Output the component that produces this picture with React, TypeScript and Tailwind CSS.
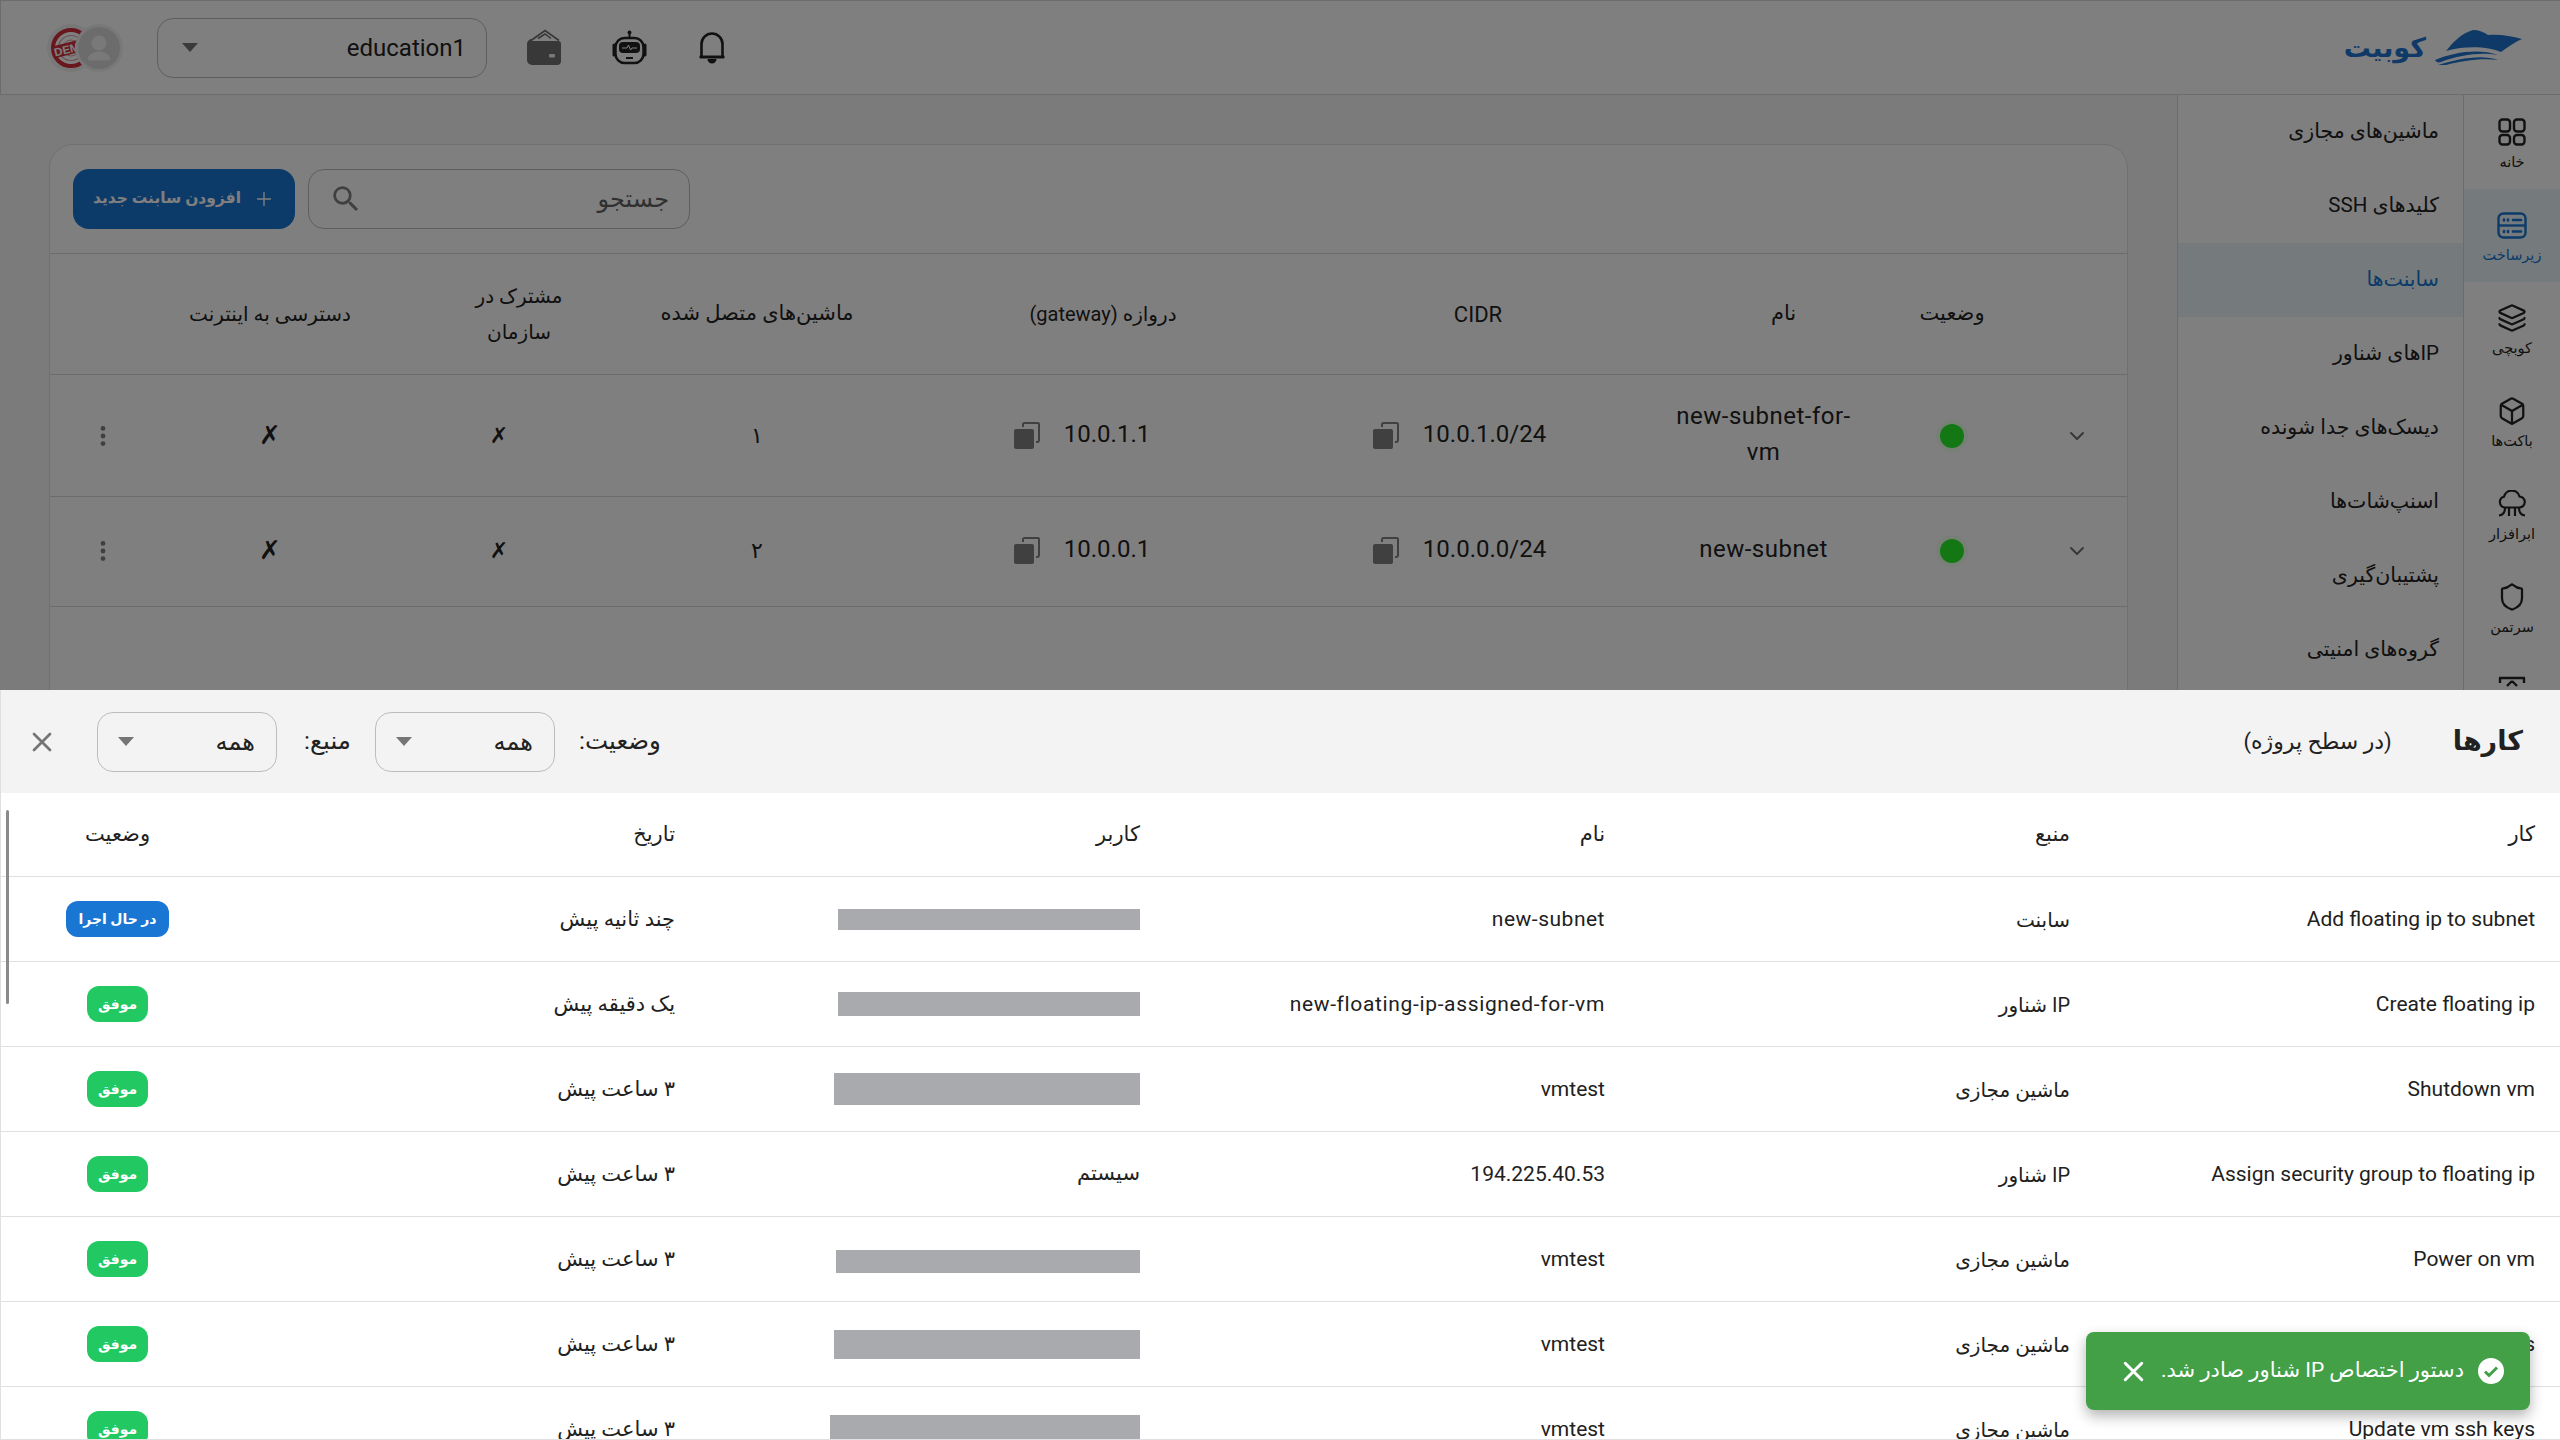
import React from "react";
import { Layers, Box, Shield, X, ChevronDown, Plus, MoreVertical } from "lucide-react";

const navItems = ["ماشین‌های مجازی", "کلیدهای SSH", "سابنت‌ها", "IPهای شناور", "دیسک‌های جدا شونده", "اسنپ‌شات‌ها", "پشتیبان‌گیری", "گروه‌های امنیتی"];

function Caret() {
  return (
    <svg width="16" height="9" viewBox="0 0 16 9" className="shrink-0">
      <path d="M0 0h16L8 9z" fill="#757575" />
    </svg>
  );
}

function CopyIcon() {
  return (
    <svg width="26" height="27" viewBox="0 0 26 27" className="shrink-0">
      <path d="M9 5V2.500A1.500 1.500 0 0 1 10.500 1H24a1 1 0 0 1 1 1v16a2 2 0 0 1-2 2h-1" fill="none" stroke="#808080" strokeWidth="2" />
      <rect x="0" y="7" width="20" height="20" rx="2" fill="#808080" />
    </svg>
  );
}

function Demo() {
  return (
    <svg width="48" height="48" viewBox="0 0 48 48">
      <circle cx="24" cy="24" r="24" fill="#f0f0f0" />
      <circle cx="24" cy="24" r="18" fill="#fff" stroke="#d32f3a" strokeWidth="4" />
      <circle cx="24" cy="24" r="12.500" fill="none" stroke="#d9a0a4" strokeWidth="1.200" />
      <circle cx="24" cy="24" r="8" fill="none" stroke="#d9a0a4" strokeWidth="1" />
      <g transform="rotate(-14 24 24)">
        <rect x="6" y="18" width="36" height="12" fill="#d32f3a" />
        <text x="24" y="28.500" textAnchor="middle" fontSize="11.500" fontWeight="700" fill="#fff" fontFamily="Liberation Sans, sans-serif">DEMO</text>
      </g>
    </svg>
  );
}

function Avatar() {
  return (
    <svg width="48" height="48" viewBox="0 0 48 48">
      <circle cx="24" cy="24" r="24" fill="#f0f0f0" />
      <circle cx="24" cy="24" r="21" fill="#d8d8d8" />
      <circle cx="24" cy="19" r="7.500" fill="#f2f2f2" />
      <path d="M13 35c0-5 6-7.500 11-7.500S35 30 35 35c0 1-.7 1.500-1.500 1.500h-19C13.700 36.500 13 36 13 35z" fill="#f2f2f2" />
    </svg>
  );
}

function Wallet() {
  return (
    <svg width="37" height="37" viewBox="0 0 37 37">
      <path d="M6 11.500 20 1.500 34 11.500" fill="none" stroke="#707070" strokeWidth="1.800" />
      <path d="M13 9.500 20 5 26 9.500" fill="none" stroke="#707070" strokeWidth="1.500" />
      <path d="M7 12h26a3 3 0 0 1 3 3v17a4 4 0 0 1-4 4H7a5 5 0 0 1-5-5V15a5 5 0 0 1 5-5z" fill="#707070" />
      <rect x="24" y="25" width="6" height="3.500" rx="1" fill="#f0f0f0" />
    </svg>
  );
}

function Robot() {
  return (
    <svg width="37" height="37" viewBox="0 0 37 37">
      <circle cx="18.500" cy="3.500" r="2" fill="#222" />
      <path d="M18.500 5v4" stroke="#222" strokeWidth="2" />
      <rect x="4.500" y="9" width="28" height="25" rx="9" fill="none" stroke="#222" strokeWidth="2.500" />
      <path d="M3 16v10M34 16v10" stroke="#222" strokeWidth="3" strokeLinecap="round" />
      <rect x="8" y="13" width="21" height="11" rx="4" fill="#222" />
      <path d="M11 19h5l1.500-3 2 5 1.500-2h5" fill="none" stroke="#fff" strokeWidth="1" />
      <path d="M15 29h7" stroke="#222" strokeWidth="2" />
    </svg>
  );
}

function Bell() {
  return (
    <svg width="28" height="33" viewBox="0 0 28 33">
      <path d="M3.500 26V13a10.500 10.500 0 0 1 21 0v13z" fill="none" stroke="#222" strokeWidth="2.600" />
      <path d="M1.500 26h25" stroke="#222" strokeWidth="2.600" />
      <path d="M9.500 28h9c0 2.500-2 4.500-4.500 4.500S9.500 30.500 9.500 28z" fill="#222" />
    </svg>
  );
}

function Boat() {
  return (
    <svg width="87" height="35" viewBox="0 0 87 35">
      <path d="M11 21C18 12 27 3 38 0c6 0 11 2 15 5 12-1 23 1 34 4-7 3-14 8-21 13C54 17 33 15 11 21z" fill="#1e75d0" />
      <path d="M0 30c18-8 45-12 63-5-18-3-38 0-57 7-3 1-5 0-6-2z" fill="#1e75d0" />
      <path d="M3 35c20-6 43-11 60-5-18-2-36 1-52 5z" fill="#1e75d0" />
    </svg>
  );
}

function HomeIcon() {
  return (
    <svg width="28" height="28" viewBox="0 0 28 28" fill="none" stroke="#222" strokeWidth="2.400">
      <rect x="1.500" y="1.500" width="10.500" height="12" rx="3" />
      <rect x="16" y="1.500" width="10.500" height="12" rx="3" />
      <rect x="1.500" y="17" width="10.500" height="9.500" rx="3" />
      <rect x="16" y="17" width="10.500" height="9.500" rx="3" />
    </svg>
  );
}

function ServerIcon() {
  return (
    <svg width="30" height="27" viewBox="0 0 30 27" fill="none" stroke="#1976d2" strokeWidth="2.400">
      <rect x="1.500" y="1.500" width="27" height="24" rx="5" />
      <path d="M1.500 13.500h27" />
      <path d="M7 7.500v1M11 7.500v1M7 19v1M11 19v1M16 8h8M16 19.500h8" strokeWidth="2.600" strokeLinecap="round" />
    </svg>
  );
}

function CloudIcon() {
  return (
    <svg width="28" height="28" viewBox="0 0 28 28" fill="none" stroke="#222" strokeWidth="2.200">
      <path d="M7 17.500a5.500 5.500 0 0 1-1-10.800A8 8 0 0 1 21.500 6.500 5.500 5.500 0 0 1 21 17.500z" />
      <path d="M7 18c0 4-1 7-6 7.500M11 18v8M17 18v8M21 18c0 4 1 7 6 7.500" />
    </svg>
  );
}

function ScreenIcon() {
  return (
    <svg width="28" height="28" viewBox="0 0 28 28" fill="none" stroke="#222" strokeWidth="2.400">
      <path d="M1 2h26M2 2v5M26 2v5M14 5l-5 5M14 5l5 5" />
    </svg>
  );
}

function RailItem({ label, icon, active }: { label: string; icon: React.ReactNode; active?: boolean }) {
  return (
    <div className={active ? "flex h-[93px] shrink-0 flex-col items-center gap-[1px] bg-[#eaf4fa] pt-[22px] text-[#1976d2]" : "flex h-[93px] shrink-0 flex-col items-center gap-[1px] pt-[22px] text-[#222]"}>
      <div className="flex h-[28px] items-center justify-center">{icon}</div>
      <span className="mt-[2px] text-[14.500px] leading-[28px]">{label}</span>
    </div>
  );
}

const Cols = "grid grid-cols-[100px_150px_227px_344px_406px_286px_190px_308px_66px] items-center text-center";

function SubnetRow({ name, cidr, gateway, count, tall }: { name: React.ReactNode; cidr: string; gateway: string; count: string; tall?: boolean }) {
  return (
    <div className={`${Cols} ${tall ? "h-[122px]" : "h-[110px] pb-[2px]"} border-b border-[#d8d8d8] text-[24px] text-[#222]`}>
      <div className="flex justify-center"><ChevronDown size={24} color="#707070" strokeWidth={2} /></div>
      <div className="flex justify-center"><span className="h-[24px] w-[24px] rounded-full bg-[#26f026] shadow-[0_0_0_4px_rgba(38,240,38,0.08)]" /></div>
      <div className="pb-[3px] leading-[36px] tracking-[0.5px]">{name}</div>
      <div className="flex items-center justify-center gap-[24px] pr-[37px]" dir="ltr"><CopyIcon /><span className="pb-[3px]">{cidr}</span></div>
      <div className="flex items-center justify-center gap-[24px] pr-[42px]" dir="ltr"><CopyIcon /><span className="pb-[3px]">{gateway}</span></div>
      <div className="text-[22px]">{count}</div>
      <div className="pr-[40px] text-[22px]">✗</div>
      <div className="text-[26px]">✗</div>
      <div className="flex justify-start"><MoreVertical size={26} color="#808080" fill="#808080" strokeWidth={2.500} /></div>
    </div>
  );
}

const rows: { job: string; res: string; name: string; bar?: string; user?: string; date: string; badge?: boolean; nameCls?: string }[] = [
  { job: "Add floating ip to subnet", res: "سابنت", name: "new-subnet", nameCls: "tracking-[0.5px]", bar: "h-[21px] w-[302px]", date: "چند ثانیه پیش", badge: true },
  { job: "Create floating ip", res: "IP شناور", name: "new-floating-ip-assigned-for-vm", nameCls: "tracking-[0.65px]", bar: "h-[24px] w-[302px]", date: "یک دقیقه پیش" },
  { job: "Shutdown vm", res: "ماشین مجازی", name: "vmtest", bar: "h-[32px] w-[306px]", date: "۳ ساعت پیش" },
  { job: "Assign security group to floating ip", res: "IP شناور", name: "194.225.40.53", user: "سیستم", date: "۳ ساعت پیش" },
  { job: "Power on vm", res: "ماشین مجازی", name: "vmtest", bar: "mt-[4px] h-[23px] w-[304px]", date: "۳ ساعت پیش" },
  { job: "Attach ssh keys", res: "ماشین مجازی", name: "vmtest", bar: "h-[29px] w-[306px]", date: "۳ ساعت پیش" },
  { job: "Update vm ssh keys", res: "ماشین مجازی", name: "vmtest", bar: "h-[29px] w-[310px]", date: "۳ ساعت پیش" },
];

const JobCols = "grid grid-cols-[repeat(5,465px)_235px] items-center text-right";

export default function App() {
  return (
    <div className="relative flex h-[1440px] w-[2560px] flex-col overflow-hidden bg-white font-[Roboto,'DejaVu_Sans',sans-serif] text-[#212121]">
      {/* page behind the panel */}
      <div className="relative flex h-[690px] shrink-0 flex-col overflow-hidden bg-[#f6f6f6]">
        <header className="flex h-[95px] shrink-0 items-center justify-between border-b border-l border-t border-[#d8d8d8] bg-white pl-[46px] pr-[38px]">
          <div className="flex items-center">
            <div className="relative h-[48px] w-[76px]">
              <div className="absolute left-0 top-0"><Demo /></div>
              <div className="absolute right-0 top-0"><Avatar /></div>
            </div>
            <div className="ml-[34px] flex h-[60px] w-[330px] items-center justify-between rounded-[16px] border border-[#bdbdbd] pl-[24px] pr-[20px]">
              <Caret />
              <span className="text-[24px] text-[#222]">education1</span>
            </div>
            <div className="ml-[38px]"><Wallet /></div>
            <div className="ml-[49px]"><Robot /></div>
            <div className="ml-[50px]"><Bell /></div>
          </div>
          <div className="flex items-center gap-[9px]">
            <span className="text-[27px] font-bold leading-[40px] text-[#1e75d0]">کوبیت</span>
            <Boat />
          </div>
        </header>
        <div className="flex flex-1">
          <main className="flex-1 pl-[49px] pr-[49px] pt-[49px]">
            <div className="h-[700px] rounded-t-[24px] border border-[#e0e0e0] bg-white">
              <div className="flex h-[109px] items-center gap-[13px] border-b border-[#d8d8d8] pl-[23px]">
                <button className="flex h-[60px] w-[222px] items-center justify-center gap-[12px] rounded-[16px] bg-[#1976d2] text-[15.500px] font-bold text-white" dir="rtl">
                  <Plus size={22} strokeWidth={1.500} />
                  <span>افزودن سابنت جدید</span>
                </button>
                <div className="flex h-[60px] w-[382px] items-center justify-between rounded-[16px] border border-[#bdbdbd] pl-[20px] pr-[20px]">
                  <svg width="34" height="34" viewBox="0 0 24 24" fill="#808080"><path d="M15.500 14h-.79l-.28-.27A6.470 6.470 0 0 0 16 9.500 6.500 6.500 0 1 0 9.500 16c1.610 0 3.090-.59 4.230-1.570l.27.28v.79l5 4.990L20.490 19l-4.990-5zm-6 0C7.010 14 5 11.990 5 9.500S7.010 5 9.500 5 14 7.010 14 9.500 11.990 14 9.500 14z" /></svg>
                  <span className="text-[24px] text-[#616161]">جستجو</span>
                </div>
              </div>
              <div dir="rtl">
                <div className={`${Cols} h-[121px] border-b border-[#d8d8d8] text-[20px] text-[#222]`}>
                  <div />
                  <div className="text-[21px]">وضعیت</div>
                  <div className="pl-[40px] text-[21px]">نام</div>
                  <div className="text-[22px]">CIDR</div>
                  <div>دروازه (gateway)</div>
                  <div className="text-[21px]">ماشین‌های متصل شده</div>
                  <div className="px-[40px] leading-[36px]">مشترک در سازمان</div>
                  <div>دسترسی به اینترنت</div>
                  <div />
                </div>
                <SubnetRow tall name={<span className="mx-auto block w-[190px]">new-subnet-for-vm</span>} cidr="10.0.1.0/24" gateway="10.0.1.1" count="۱" />
                <SubnetRow name="new-subnet" cidr="10.0.0.0/24" gateway="10.0.0.1" count="۲" />
              </div>
            </div>
          </main>
          <aside className="w-[286px] shrink-0 border-l border-[#d8d8d8] bg-white" dir="rtl">
            {navItems.map((n, i) => (
              <div key={n} className={i === 2 ? "flex h-[74px] items-center bg-[#eaf4fa] pb-[2px] pr-[24px] text-[20.500px] text-[#1976d2]" : "flex h-[74px] items-center pb-[2px] pr-[24px] text-[20.500px] text-[#222]"}>{n}</div>
            ))}
          </aside>
          <nav className="flex w-[97px] shrink-0 flex-col border-l border-[#d8d8d8] bg-white pt-[1px]">
            <RailItem label="خانه" icon={<HomeIcon />} />
            <RailItem active label="زیرساخت" icon={<ServerIcon />} />
            <RailItem label="کوبچی" icon={<Layers size={30} strokeWidth={1.800} />} />
            <RailItem label="باکت‌ها" icon={<Box size={30} strokeWidth={1.800} />} />
            <RailItem label="ابرافزار" icon={<CloudIcon />} />
            <RailItem label="سرتمن" icon={<Shield size={30} strokeWidth={1.800} />} />
            <RailItem label="" icon={<ScreenIcon />} />
          </nav>
        </div>
        <div className="absolute inset-0 bg-black/50" />
      </div>

      {/* jobs panel */}
      <section className="relative flex h-[750px] flex-col overflow-hidden border-b border-l border-[#e0e0e0] bg-white">
        <div className="flex h-[103px] shrink-0 items-center justify-between bg-[#f3f3f3] pl-[25px] pr-[37px]">
          <div className="flex items-center">
            <X size={32} color="#757575" strokeWidth={2} />
            <div className="ml-[39px] flex h-[60px] w-[180px] items-center justify-between rounded-[16px] border border-[#bdbdbd] pl-[20px] pr-[21px]">
              <Caret />
              <span className="text-[24px]">همه</span>
            </div>
            <span className="ml-[25px] w-[49px] text-right text-[24.500px]" dir="rtl">منبع:</span>
            <div className="ml-[24px] flex h-[60px] w-[180px] items-center justify-between rounded-[16px] border border-[#bdbdbd] pl-[20px] pr-[21px]">
              <Caret />
              <span className="text-[24px]">همه</span>
            </div>
            <span className="ml-[24px] text-[24.500px]" dir="rtl">وضعیت:</span>
          </div>
          <div className="flex items-center gap-[61px]" dir="rtl">
            <span className="text-[27px] font-bold">کارها</span>
            <span className="text-[22px]">(در سطح پروژه)</span>
          </div>
        </div>
        <div dir="rtl" className="flex-1">
          <div className={`${JobCols} h-[84px] border-b border-[#e0e0e0] text-[21px]`}>
            {["کار", "منبع", "نام", "کاربر", "تاریخ"].map((h) => (
              <div key={h} className="pr-[25px]">{h}</div>
            ))}
            <div className="text-center">وضعیت</div>
          </div>
          {rows.map((r, i) => (
            <div key={i} className={`${JobCols} h-[85px] border-b border-[#e0e0e0] text-[21px]`}>
              <div className="pr-[25px] pt-[2px]" dir="rtl">{r.job}</div>
              <div className="pr-[25px] pt-[2px] text-[20px]">{r.res}</div>
              <div className={`pr-[25px] pt-[2px] ${r.nameCls ?? ""}`}>{r.name}</div>
              <div className="pr-[25px]">
                {r.bar ? <div className={`${r.bar} bg-[#a9aaad]`} /> : r.user}
              </div>
              <div className="pr-[25px] pt-[2px]">{r.date}</div>
              <div className="flex justify-center">
                <span className={r.badge ? "flex h-[36px] w-[103px] items-center justify-center rounded-[12px] bg-[#1976d2] text-[14px] font-bold text-white" : "flex h-[36px] w-[61px] items-center justify-center rounded-[12px] bg-[#22c962] text-[14px] font-bold text-white"}>
                  {r.badge ? "در حال اجرا" : "موفق"}
                </span>
              </div>
            </div>
          ))}
        </div>
        <div className="absolute bottom-[435px] left-[5px] h-[194px] w-[3px] rounded-full bg-[#8a8a8a]" />
      </section>

      {/* toast */}
      <div className="absolute left-[2086px] top-[1332px] flex h-[78px] w-[444px] items-center justify-between rounded-[8px] bg-[#43a047] pl-[31px] pr-[26px] text-white shadow-[0_6px_14px_rgba(0,0,0,0.3)]">
        <X size={33} strokeWidth={2.200} />
        <div className="flex items-center gap-[14px]" dir="rtl">
          <svg width="26" height="26" viewBox="0 0 26 26"><circle cx="13" cy="13" r="13" fill="#fff" /><path d="M7 13.500l4 4 8-8" fill="none" stroke="#43a047" strokeWidth="3" /></svg>
          <span className="text-[21px]">دستور اختصاص IP شناور صادر شد.</span>
        </div>
      </div>
    </div>
  );
}
